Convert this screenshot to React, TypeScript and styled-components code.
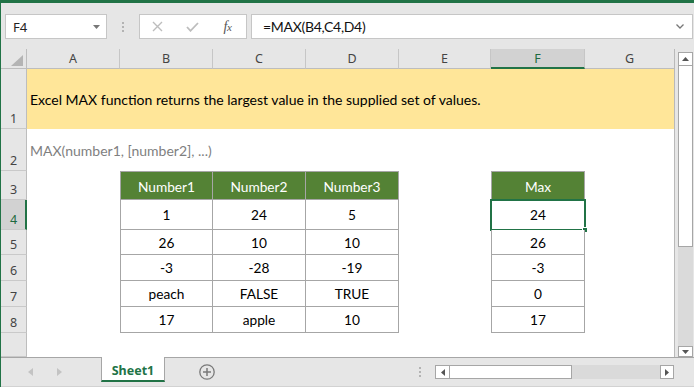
import React from "react";
import styled, { createGlobalStyle } from "styled-components";

const GREEN = "#217346";
const CELL_FONT = `Lato, "Liberation Sans", sans-serif`;
const UI_FONT = `"Noto Sans", "Liberation Sans", sans-serif`;

const Global = createGlobalStyle`
  html, body { margin: 0; padding: 0; background: #fff; }
  #root { width: 694px; height: 387px; overflow: hidden; }
  *, *::before, *::after { box-sizing: border-box; }
`;

const Frame = styled.div`
  width: 694px;
  height: 387px;
  background: #e6e6e6;
  border-top: 3px solid ${GREEN};
  border-left: 1px solid ${GREEN};
  display: flex;
  flex-direction: column;
  font-family: ${UI_FONT};
  overflow: hidden;
`;

/* ---------- formula bar ---------- */
const FormulaBar = styled.div`
  flex: none;
  height: 46px;
  display: flex;
  align-items: flex-start;
  padding: 11px 1px 0 4px;
`;

const NameBox = styled.div`
  width: 102px;
  height: 25px;
  background: #fff;
  border: 1px solid #c6c6c6;
  display: flex;
  align-items: center;
  justify-content: space-between;
  padding: 0 6px 0 7px;
  font-size: 13px;
  color: #222;
`;

const Grip = styled.div`
  width: 32px;
  height: 25px;
  display: flex;
  flex-direction: column;
  align-items: center;
  justify-content: center;
  gap: 2px;
`;

const GripDot = styled.span`
  width: 2px;
  height: 2px;
  background: #b3b3b3;
`;

const FxBox = styled.div`
  width: 108px;
  height: 25px;
  background: #fff;
  border: 1px solid #c6c6c6;
  display: grid;
  grid-template-columns: repeat(3, 35px);
  align-items: center;
  justify-items: center;
`;

const FxLabel = styled.span`
  font-family: "Liberation Serif", serif;
  font-style: italic;
  font-size: 14px;
  color: #555;
  letter-spacing: -0.5px;
`;

const FxSub = styled.span`
  font-size: 11px;
`;

const FormulaInput = styled.div`
  flex: 1;
  height: 25px;
  margin-left: 4px;
  background: #fff;
  border: 1px solid #c6c6c6;
  display: flex;
  align-items: center;
  justify-content: space-between;
  padding: 0 8px 0 11px;
  font-family: ${CELL_FONT};
  font-size: 14px;
  letter-spacing: -0.3px;
  color: #111;
`;

/* ---------- sheet ---------- */
const Main = styled.div`
  flex: none;
  height: 308px;
  display: flex;
`;

const Grid = styled.div`
  width: 674px;
  height: 308px;
  display: grid;
  grid-template-columns: 26px 93px 93px 93px 93px 92px 94px 89px;
  grid-template-rows: 20px 60px 42px 29px 30px 25px 26px 26px 26px 1fr;
  border-right: 1px solid #b9b9b9;
  background: #fff;
`;

const Corner = styled.div`
  background: #e6e6e6;
  border-right: 1px solid #bdbdbd;
  border-bottom: 1px solid #bdbdbd;
  display: flex;
  align-items: flex-end;
  justify-content: flex-end;
  padding: 0 3px 2px 0;
`;

const ColHead = styled.div<{ $active?: boolean; $last?: boolean }>`
  background: ${(p) => (p.$active ? "#d2d2d2" : "#e6e6e6")};
  border-right: ${(p) => (p.$last ? "none" : "1px solid #c6c6c6")};
  border-bottom: ${(p) => (p.$active ? `2px solid ${GREEN}` : "1px solid #bdbdbd")};
  display: flex;
  align-items: center;
  justify-content: center;
  padding-top: ${(p) => (p.$active ? "1px" : "0")};
  font-size: 12.5px;
  color: ${(p) => (p.$active ? "#1d6a40" : "#444")};
`;

const RowHead = styled.div<{ $active?: boolean }>`
  background: ${(p) => (p.$active ? "#d2d2d2" : "#e6e6e6")};
  border-right: ${(p) => (p.$active ? `2px solid ${GREEN}` : "1px solid #bdbdbd")};
  border-bottom: 1px solid #c9c9c9;
  display: flex;
  align-items: flex-end;
  justify-content: center;
  padding: 0 0 1px ${(p) => (p.$active ? "1px" : "0")};
  font-size: 12.5px;
  line-height: 16px;
  color: ${(p) => (p.$active ? "#1d6a40" : "#444")};
`;

const Banner = styled.div<{ $variant: "title" | "syntax" }>`
  grid-column: 2 / -1;
  background: ${(p) => (p.$variant === "title" ? "#ffe699" : "#fff")};
  color: ${(p) => (p.$variant === "title" ? "#000" : "#7f7f7f")};
  display: flex;
  align-items: center;
  padding-left: 3px;
  font-family: ${CELL_FONT};
  font-size: 14px;
  white-space: nowrap;
`;

const Blank = styled.div<{ $span?: boolean }>`
  grid-column: ${(p) => (p.$span ? "2 / -1" : "auto")};
  background: #fff;
`;

const TCell = styled.div<{ $head?: boolean; $left?: boolean; $top?: boolean }>`
  position: relative;
  display: flex;
  align-items: center;
  justify-content: center;
  background: ${(p) => (p.$head ? "#548235" : "#fff")};
  color: ${(p) => (p.$head ? "#fff" : "#000")};
  border-right: 1px solid #a6a6a6;
  border-bottom: 1px solid #a6a6a6;
  border-left: ${(p) => (p.$left ? "1px solid #a6a6a6" : "none")};
  border-top: ${(p) => (p.$top ? "1px solid #a6a6a6" : "none")};
  padding-top: ${(p) => (p.$head ? "2px" : "0")};
  font-family: ${CELL_FONT};
  font-size: 13.7px;
  white-space: nowrap;
`;

const Selection = styled.div`
  position: absolute;
  left: -2px;
  top: -1px;
  right: -2px;
  bottom: -2px;
  border: 2px solid ${GREEN};
  pointer-events: none;
`;

const FillHandle = styled.div`
  position: absolute;
  right: -4px;
  bottom: -4px;
  width: 6px;
  height: 6px;
  background: ${GREEN};
  border: 1px solid #fff;
`;

/* ---------- vertical scrollbar ---------- */
const VScroll = styled.div`
  width: 19px;
  height: 308px;
  display: flex;
  flex-direction: column;
  padding: 3px 1px 0 3px;
`;

const ScrollBtn = styled.div<{ $h: number; $w?: number }>`
  flex: none;
  height: ${(p) => p.$h}px;
  width: ${(p) => (p.$w ? `${p.$w}px` : "auto")};
  background: #fff;
  border: 1px solid #a6a6a6;
  display: flex;
  align-items: center;
  justify-content: center;
`;

const VThumb = styled.div`
  flex: none;
  height: 181px;
  background: #fff;
  border: 1px solid #a6a6a6;
  border-top: none;
`;

const Track = styled.div`
  flex: 1;
  background: #dadada;
`;

/* ---------- tab bar ---------- */
const TabBar = styled.div`
  flex: none;
  height: 30px;
  display: flex;
  align-items: flex-start;
  border-top: 1px solid #a6a6a6;
  border-bottom: 1px solid #d2d2d2;
`;

const NavArrows = styled.div`
  width: 100px;
  display: flex;
  gap: 24px;
  padding-left: 27px;
  margin-top: 10px;
`;

const SheetTab = styled.div`
  width: 64px;
  height: 25px;
  margin-top: -1px;
  background: #fff;
  border-left: 1px solid #a6a6a6;
  border-right: 1px solid #a6a6a6;
  border-bottom: 2px solid ${GREEN};
  display: flex;
  align-items: center;
  justify-content: center;
  padding-top: 3px;
  font-size: 12.5px;
  font-weight: 700;
  color: ${GREEN};
`;

const AddSheet = styled.div`
  margin: 6px 0 0 34px;
  width: 16px;
  height: 16px;
  display: flex;
`;

const Spacer = styled.div`
  flex: 1;
`;

const HDots = styled.div`
  margin: 9px 14px 0 0;
  display: flex;
  flex-direction: column;
  gap: 2px;
`;

const HScroll = styled.div`
  width: 239px;
  height: 14px;
  margin: 7px 20px 0 0;
  display: flex;
`;

const HThumb = styled.div`
  width: 122px;
  background: #fff;
  border: 1px solid #a6a6a6;
  border-left: none;
`;

/* ---------- icons ---------- */
const Tri = ({ dir, color = "#666", w = 7, h = 4 }: { dir: "up" | "down" | "left" | "right"; color?: string; w?: number; h?: number }) => {
  const pts: Record<string, string> = {
    down: `0,0 ${w},0 ${w / 2},${h}`,
    up: `0,${h} ${w},${h} ${w / 2},0`,
    left: `${w},0 ${w},${h} 0,${h / 2}`,
    right: `0,0 0,${h} ${w},${h / 2}`,
  };
  return (
    <svg width={w} height={h} viewBox={`0 0 ${w} ${h}`}>
      <polygon points={pts[dir]} fill={color} />
    </svg>
  );
};

type Row = { n: number; vals: [string, string, string, string]; head?: boolean };

const rows: Row[] = [
  { n: 3, vals: ["Number1", "Number2", "Number3", "Max"], head: true },
  { n: 4, vals: ["1", "24", "5", "24"] },
  { n: 5, vals: ["26", "10", "10", "26"] },
  { n: 6, vals: ["-3", "-28", "-19", "-3"] },
  { n: 7, vals: ["peach", "FALSE", "TRUE", "0"] },
  { n: 8, vals: ["17", "apple", "10", "17"] },
];

const cols = ["A", "B", "C", "D", "E", "F", "G"];

export default function App() {
  return (
    <>
      <Global />
      <Frame>
        <FormulaBar>
          <NameBox>
            <span>F4</span>
            <Tri dir="down" color="#777" w={7} h={4} />
          </NameBox>
          <Grip>
            <GripDot />
            <GripDot />
            <GripDot />
          </Grip>
          <FxBox>
            <svg width="11" height="11" viewBox="0 0 11 11">
              <path d="M1 1 L10 10 M10 1 L1 10" stroke="#bdbdbd" strokeWidth="1.4" fill="none" />
            </svg>
            <svg width="13" height="10" viewBox="0 0 13 10">
              <polyline points="1,5 4.5,8.8 12,1" stroke="#bdbdbd" strokeWidth="1.8" fill="none" />
            </svg>
            <FxLabel>
              f<FxSub>x</FxSub>
            </FxLabel>
          </FxBox>
          <FormulaInput>
            <span>=MAX(B4,C4,D4)</span>
            <svg width="8" height="5" viewBox="0 0 8 5">
              <polyline points="0.5,0.5 4,4 7.5,0.5" stroke="#777" strokeWidth="1.3" fill="none" />
            </svg>
          </FormulaInput>
        </FormulaBar>

        <Main>
          <Grid>
            <Corner>
              <svg width="12" height="11" viewBox="0 0 12 11">
                <polygon points="12,0 12,11 0,11" fill="#b4b4b4" />
              </svg>
            </Corner>
            {cols.map((c, i) => (
              <ColHead key={c} $active={c === "F"} $last={i === cols.length - 1}>
                {c}
              </ColHead>
            ))}

            <RowHead>1</RowHead>
            <Banner $variant="title">
              Excel MAX function returns the largest value in the supplied set of values.
            </Banner>

            <RowHead>2</RowHead>
            <Banner $variant="syntax">MAX(number1, [number2], ...)</Banner>

            {rows.map((r) => (
              <React.Fragment key={r.n}>
                <RowHead $active={r.n === 4}>{r.n}</RowHead>
                <Blank />
                <TCell $head={r.head} $left $top={r.head}>
                  {r.vals[0]}
                </TCell>
                <TCell $head={r.head} $top={r.head}>
                  {r.vals[1]}
                </TCell>
                <TCell $head={r.head} $top={r.head}>
                  {r.vals[2]}
                </TCell>
                <Blank />
                <TCell $head={r.head} $left $top={r.head}>
                  {r.vals[3]}
                  {r.n === 4 && (
                    <Selection>
                      <FillHandle />
                    </Selection>
                  )}
                </TCell>
                <Blank />
              </React.Fragment>
            ))}

            <RowHead />
            <Blank $span />
          </Grid>

          <VScroll>
            <ScrollBtn $h={14}>
              <Tri dir="up" color="#555" w={7} h={4} />
            </ScrollBtn>
            <VThumb />
            <Track />
            <ScrollBtn $h={11}>
              <Tri dir="down" color="#555" w={7} h={4} />
            </ScrollBtn>
          </VScroll>
        </Main>

        <TabBar>
          <NavArrows>
            <Tri dir="left" color="#c3c3c3" w={5} h={8} />
            <Tri dir="right" color="#c3c3c3" w={5} h={8} />
          </NavArrows>
          <SheetTab>Sheet1</SheetTab>
          <AddSheet>
            <svg width="16" height="16" viewBox="0 0 16 16">
              <circle cx="8" cy="8" r="7.2" stroke="#7a7a7a" strokeWidth="1.3" fill="none" />
              <path d="M8 4 V12 M4 8 H12" stroke="#7a7a7a" strokeWidth="1.5" />
            </svg>
          </AddSheet>
          <Spacer />
          <HDots>
            <GripDot />
            <GripDot />
            <GripDot />
          </HDots>
          <HScroll>
            <ScrollBtn $h={14} $w={15}>
              <Tri dir="left" color="#555" w={4} h={7} />
            </ScrollBtn>
            <HThumb />
            <Track />
            <ScrollBtn $h={14} $w={14}>
              <Tri dir="right" color="#555" w={4} h={7} />
            </ScrollBtn>
          </HScroll>
        </TabBar>
      </Frame>
    </>
  );
}
